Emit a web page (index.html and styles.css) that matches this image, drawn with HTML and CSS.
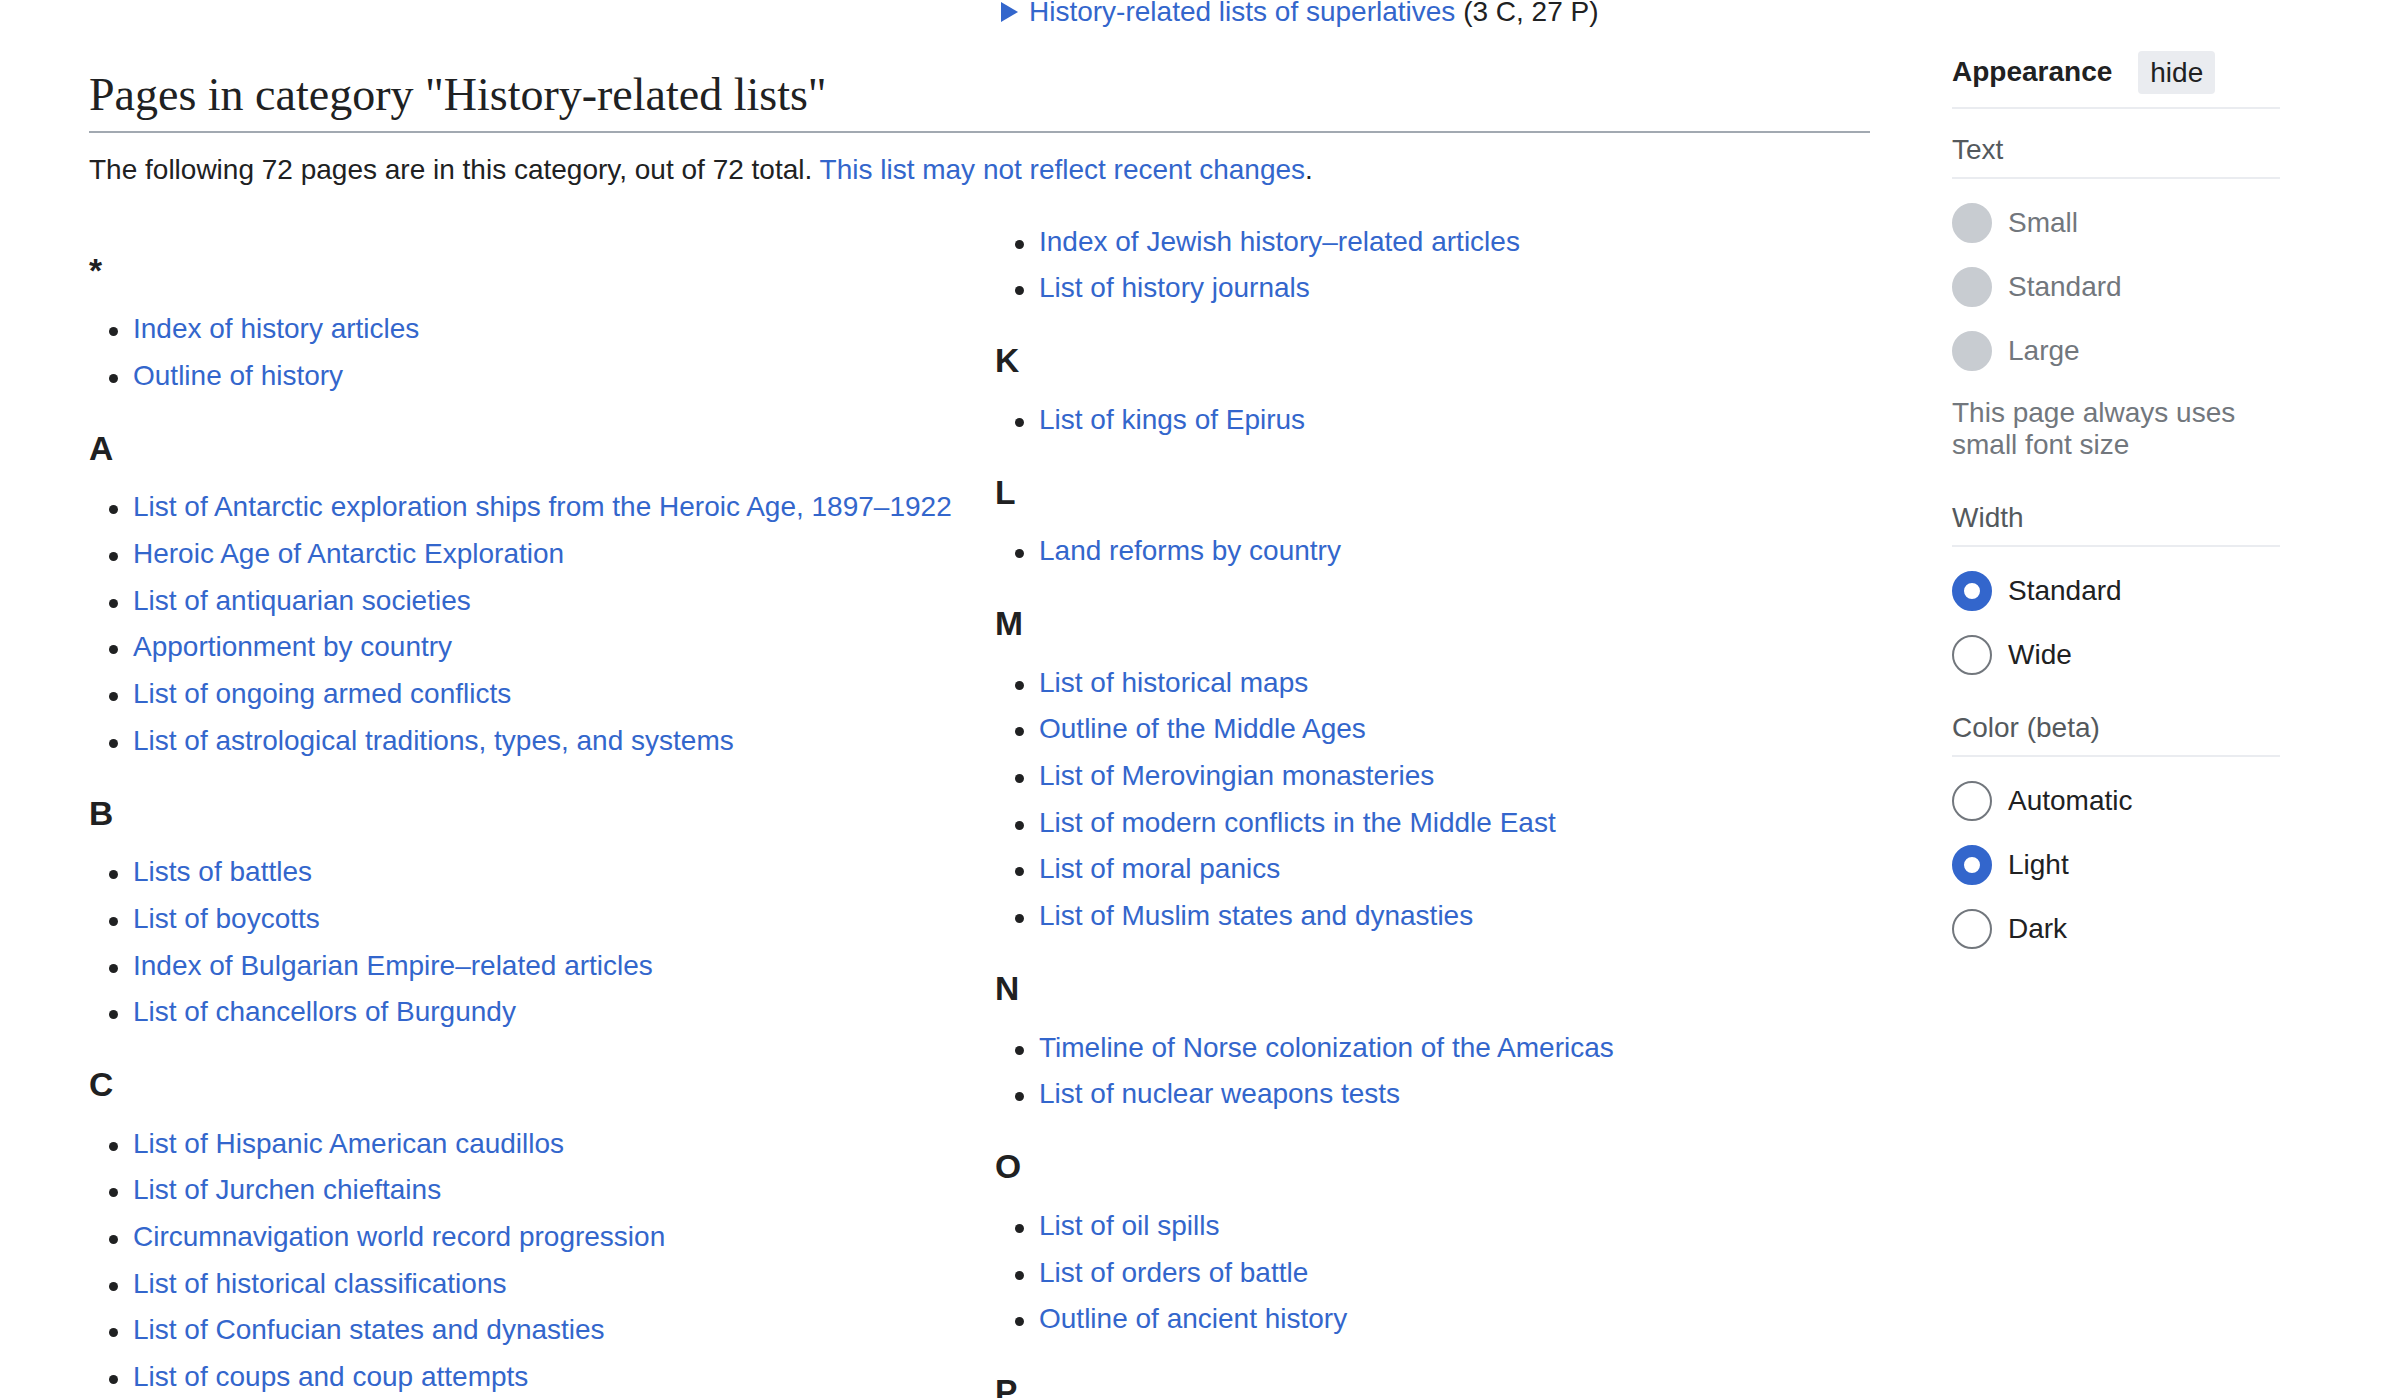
FILE: index.html
```html
<!DOCTYPE html>
<html lang="en">
<head>
<meta charset="utf-8">
<title>Category:History-related lists</title>
<link rel="stylesheet" href="styles.css">
</head>
<body>
<div class="page">
  <main class="content">
    <div class="subcats">
      <div class="subcats-col"></div>
      <div class="subcats-col">
        <div class="ct-item"><svg class="ct-bullet" viewBox="0 0 17 20" width="17" height="20" aria-hidden="true"><polygon points="0,0 17,10 0,20" fill="#3366cc"/></svg><a href="#">History-related lists of superlatives</a> (3 C, 27 P)</div>
      </div>
    </div>

    <h1 class="page-title">Pages in category "History-related lists"</h1>
    <p class="intro">The following 72 pages are in this category, out of 72 total. <a href="#">This list may not reflect recent changes</a>.</p>

    <div class="category-cols">
      <div class="cat-col cat-col-left">
        <div class="group">
          <h3>*</h3>
          <ul>
            <li><a href="#">Index of history articles</a></li>
            <li><a href="#">Outline of history</a></li>
          </ul>
        </div>
        <div class="group">
          <h3>A</h3>
          <ul>
            <li><a href="#">List of Antarctic exploration ships from the Heroic Age, 1897–1922</a></li>
            <li><a href="#">Heroic Age of Antarctic Exploration</a></li>
            <li><a href="#">List of antiquarian societies</a></li>
            <li><a href="#">Apportionment by country</a></li>
            <li><a href="#">List of ongoing armed conflicts</a></li>
            <li><a href="#">List of astrological traditions, types, and systems</a></li>
          </ul>
        </div>
        <div class="group">
          <h3>B</h3>
          <ul>
            <li><a href="#">Lists of battles</a></li>
            <li><a href="#">List of boycotts</a></li>
            <li><a href="#">Index of Bulgarian Empire–related articles</a></li>
            <li><a href="#">List of chancellors of Burgundy</a></li>
          </ul>
        </div>
        <div class="group">
          <h3>C</h3>
          <ul>
            <li><a href="#">List of Hispanic American caudillos</a></li>
            <li><a href="#">List of Jurchen chieftains</a></li>
            <li><a href="#">Circumnavigation world record progression</a></li>
            <li><a href="#">List of historical classifications</a></li>
            <li><a href="#">List of Confucian states and dynasties</a></li>
            <li><a href="#">List of coups and coup attempts</a></li>
          </ul>
        </div>
      </div>

      <div class="cat-col cat-col-right">
        <div class="group group-cont">
          <ul>
            <li><a href="#">Index of Jewish history–related articles</a></li>
            <li><a href="#">List of history journals</a></li>
          </ul>
        </div>
        <div class="group">
          <h3>K</h3>
          <ul>
            <li><a href="#">List of kings of Epirus</a></li>
          </ul>
        </div>
        <div class="group">
          <h3>L</h3>
          <ul>
            <li><a href="#">Land reforms by country</a></li>
          </ul>
        </div>
        <div class="group">
          <h3>M</h3>
          <ul>
            <li><a href="#">List of historical maps</a></li>
            <li><a href="#">Outline of the Middle Ages</a></li>
            <li><a href="#">List of Merovingian monasteries</a></li>
            <li><a href="#">List of modern conflicts in the Middle East</a></li>
            <li><a href="#">List of moral panics</a></li>
            <li><a href="#">List of Muslim states and dynasties</a></li>
          </ul>
        </div>
        <div class="group">
          <h3>N</h3>
          <ul>
            <li><a href="#">Timeline of Norse colonization of the Americas</a></li>
            <li><a href="#">List of nuclear weapons tests</a></li>
          </ul>
        </div>
        <div class="group">
          <h3>O</h3>
          <ul>
            <li><a href="#">List of oil spills</a></li>
            <li><a href="#">List of orders of battle</a></li>
            <li><a href="#">Outline of ancient history</a></li>
          </ul>
        </div>
        <div class="group">
          <h3>P</h3>
        </div>
      </div>
    </div>
  </main>

  <aside class="sidebar">
    <div class="app-header">
      <span class="app-title">Appearance</span>
      <button class="hide-btn" type="button">hide</button>
    </div>

    <section class="app-section">
      <div class="section-title">Text</div>
      <div class="options">
        <div class="option disabled"><span class="radio"></span><span class="label">Small</span></div>
        <div class="option disabled"><span class="radio"></span><span class="label">Standard</span></div>
        <div class="option disabled"><span class="radio"></span><span class="label">Large</span></div>
      </div>
      <p class="note">This page always uses small font size</p>
    </section>

    <section class="app-section">
      <div class="section-title">Width</div>
      <div class="options">
        <div class="option"><span class="radio checked"></span><span class="label">Standard</span></div>
        <div class="option"><span class="radio"></span><span class="label">Wide</span></div>
      </div>
    </section>

    <section class="app-section">
      <div class="section-title">Color (beta)</div>
      <div class="options">
        <div class="option"><span class="radio"></span><span class="label">Automatic</span></div>
        <div class="option"><span class="radio checked"></span><span class="label">Light</span></div>
        <div class="option"><span class="radio"></span><span class="label">Dark</span></div>
      </div>
    </section>
  </aside>
</div>
</body>
</html>
```

FILE: styles.css
```css
html, body {
  margin: 0;
  padding: 0;
  background: #ffffff;
}

body {
  font-family: "Liberation Sans", Arial, Helvetica, sans-serif;
  font-size: 28px;
  color: #202122;
}

a {
  color: #3366cc;
  text-decoration: none;
}

.page {
  display: flex;
  align-items: flex-start;
  height: 1398px;
  overflow: hidden;
  padding-left: 89px;
  box-sizing: border-box;
}

.content {
  flex: none;
  width: 1781px;
}

/* subcategory tail */
.subcats {
  display: grid;
  grid-template-columns: 1fr 1fr;
  column-gap: 31px;
  margin-top: -10px;
  line-height: 44px;
}

.ct-item {
  padding-left: 6px;
  white-space: nowrap;
}

.ct-bullet {
  vertical-align: -1px;
  margin-right: 11px;
}

/* heading */
.page-title {
  margin: 30.5px 0 0;
  padding-bottom: 6px;
  font-family: "Liberation Serif", "Times New Roman", serif;
  font-size: 46px;
  font-weight: normal;
  line-height: 60px;
  color: #202122;
  border-bottom: 2px solid #a2a9b1;
}

.intro {
  margin: 15px 0 28px;
  line-height: 44px;
}

/* category listing */
.category-cols {
  display: grid;
  grid-template-columns: 1fr 1fr;
  column-gap: 31px;
}

.group h3 {
  margin: 24px 0 9.5px;
  font-size: 33.6px;
  font-weight: bold;
  line-height: 54px;
  color: #202122;
}

.group ul {
  margin: 0;
  padding: 0 0 0 20px;
  list-style: none;
}

.group li {
  display: flex;
  line-height: 44px;
  margin-bottom: 2.7px;
  white-space: nowrap;
}

.group li::before {
  content: "";
  flex: none;
  width: 9px;
  height: 9px;
  margin: 20px 15px 0 0;
  border-radius: 50%;
  background: #202122;
}

/* sidebar */
.sidebar {
  flex: none;
  width: 328px;
  margin-left: 82px;
  padding-top: 50px;
}

.app-header {
  display: flex;
  align-items: center;
  gap: 26px;
  padding-bottom: 13px;
  border-bottom: 2px solid #eaecf0;
}

.app-title {
  font-weight: bold;
  line-height: 44px;
}

.hide-btn {
  height: 43px;
  padding: 0 12px;
  border: none;
  border-radius: 4px;
  background: #eaecf0;
  font-family: inherit;
  font-size: 28px;
  line-height: 43px;
  color: #202122;
}

.section-title {
  padding-top: 19px;
  padding-bottom: 5px;
  line-height: 44px;
  color: #54595d;
  border-bottom: 2px solid #eaecf0;
}

.options {
  padding-top: 12px;
}

.option {
  display: flex;
  align-items: center;
  gap: 16px;
  height: 64px;
}

.radio {
  flex: none;
  width: 40px;
  height: 40px;
  box-sizing: border-box;
  border: 2px solid #72777d;
  border-radius: 50%;
  background: #ffffff;
}

.radio.checked {
  border: 12px solid #3366cc;
}

.option.disabled .radio {
  border-color: #c8ccd1;
  background: #c8ccd1;
}

.option.disabled .label {
  color: #72777d;
}

.note {
  margin: 14px 0 16px;
  line-height: 32px;
  color: #72777d;
}
```
